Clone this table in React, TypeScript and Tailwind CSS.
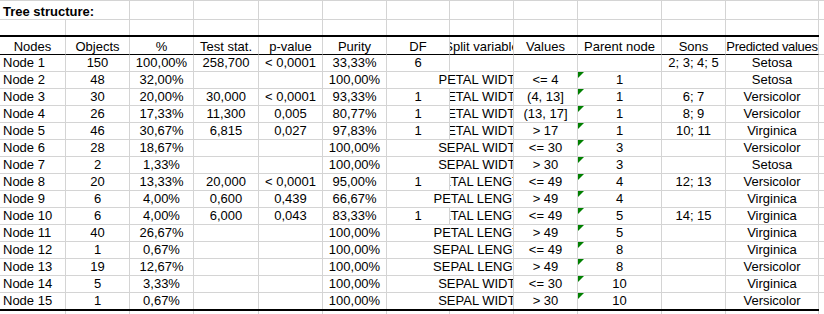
import React from 'react'

// column widths include the 1px grid line on the right
const W = [
  'w-[66px]', 'w-[64px]', 'w-[64px]', 'w-[65px]', 'w-[64px]', 'w-[64px]',
  'w-[63px]', 'w-[64px]', 'w-[64px]', 'w-[84px]', 'w-[64px]', 'w-[93px]',
]

const headers = [
  'Nodes', 'Objects', '%', 'Test stat.', 'p-value', 'Purity', 'DF',
  'Split variable', 'Values', 'Parent node', 'Sons', 'Predicted values',
]

const rows: string[][] = [
  ['Node 1', '150', '100,00%', '258,700', '< 0,0001', '33,33%', '6', '', '', '', '2; 3; 4; 5', 'Setosa'],
  ['Node 2', '48', '32,00%', '', '', '100,00%', '', 'PETAL WIDTH', '<= 4', '1', '', 'Setosa'],
  ['Node 3', '30', '20,00%', '30,000', '< 0,0001', '93,33%', '1', 'PETAL WIDTH', '(4, 13]', '1', '6; 7', 'Versicolor'],
  ['Node 4', '26', '17,33%', '11,300', '0,005', '80,77%', '1', 'PETAL WIDTH', '(13, 17]', '1', '8; 9', 'Versicolor'],
  ['Node 5', '46', '30,67%', '6,815', '0,027', '97,83%', '1', 'PETAL WIDTH', '> 17', '1', '10; 11', 'Virginica'],
  ['Node 6', '28', '18,67%', '', '', '100,00%', '', 'SEPAL WIDTH', '<= 30', '3', '', 'Versicolor'],
  ['Node 7', '2', '1,33%', '', '', '100,00%', '', 'SEPAL WIDTH', '> 30', '3', '', 'Setosa'],
  ['Node 8', '20', '13,33%', '20,000', '< 0,0001', '95,00%', '1', 'PETAL LENGTH', '<= 49', '4', '12; 13', 'Versicolor'],
  ['Node 9', '6', '4,00%', '0,600', '0,439', '66,67%', '', 'PETAL LENGTH', '> 49', '4', '', 'Virginica'],
  ['Node 10', '6', '4,00%', '6,000', '0,043', '83,33%', '1', 'PETAL LENGTH', '<= 49', '5', '14; 15', 'Virginica'],
  ['Node 11', '40', '26,67%', '', '', '100,00%', '', 'PETAL LENGTH', '> 49', '5', '', 'Virginica'],
  ['Node 12', '1', '0,67%', '', '', '100,00%', '', 'SEPAL LENGTH', '<= 49', '8', '', 'Virginica'],
  ['Node 13', '19', '12,67%', '', '', '100,00%', '', 'SEPAL LENGTH', '> 49', '8', '', 'Versicolor'],
  ['Node 14', '5', '3,33%', '', '', '100,00%', '', 'SEPAL WIDTH', '<= 30', '10', '', 'Virginica'],
  ['Node 15', '1', '0,67%', '', '', '100,00%', '', 'SEPAL WIDTH', '> 30', '10', '', 'Versicolor'],
]

function DataRow({ r, last }: { r: string[]; last: boolean }) {
  const h = last ? 'h-[16px]' : 'h-[17px] border-b'
  const base = `${h} box-border border-r border-[#d4d4d4] overflow-hidden flex items-center whitespace-nowrap leading-[16px] shrink-0`
  const dfEmpty = r[6] === '' && r[7] !== ''
  const cells: React.ReactNode[] = []

  for (let i = 0; i < 12; i++) {
    if (i === 6 && dfEmpty) {
      // split variable text spills left over the empty DF cell
      cells.push(
        <div key="merged" className={`${base} w-[127px]`}>
          <div className="ml-[63px] w-[63px] shrink-0 flex justify-center">
            <span>{r[7]}</span>
          </div>
        </div>
      )
      i++
      continue
    }
    if (i === 0) {
      cells.push(<div key={i} className={`${base} ${W[i]} pl-[3px]`}>{r[i]}</div>)
    } else if (i === 9) {
      cells.push(
        <div key={i} className={`${base} ${W[i]} justify-center relative`}>
          {r[i] !== '' && (
            <span className="absolute top-0 left-0 w-0 h-0 border-t-[6px] border-t-[#008000] border-r-[6px] border-r-transparent" />
          )}
          {r[i]}
        </div>
      )
    } else {
      cells.push(
        <div key={i} className={`${base} ${W[i]} justify-center`}>
          <span>{r[i]}</span>
        </div>
      )
    }
  }

  return (
    <div className="flex">
      {cells}
      <div className={`${h} flex-1 box-border border-[#d4d4d4]`} />
    </div>
  )
}

export default function App() {
  return (
    <div className="w-[824px] h-[314px] overflow-hidden bg-white text-black text-[13px] font-['Liberation_Sans',Arial,sans-serif]">
      {/* title row */}
      <div className="flex">
        <div className="h-[20px] w-[130px] box-border border-t border-b border-r border-[#d4d4d4] flex items-end pl-[3px] leading-[14px] font-bold whitespace-nowrap shrink-0">
          Tree structure:
        </div>
        {W.slice(2).map((w, i) => (
          <div key={i} className={`h-[20px] ${w} box-border border-t border-b border-r border-[#d4d4d4] shrink-0`} />
        ))}
        <div className="h-[20px] flex-1 box-border border-t border-b border-[#d4d4d4]" />
      </div>

      {/* empty row */}
      <div className="flex">
        {W.map((w, i) => (
          <div key={i} className={`h-[15px] ${w} box-border border-r border-[#d4d4d4] shrink-0`} />
        ))}
      </div>

      <div className="h-[2px] w-[819px] bg-black" />

      {/* header */}
      <div className="flex">
        {headers.map((t, i) => (
          <div
            key={i}
            className={`h-[18px] ${W[i]} box-border border-b border-b-black border-r border-r-[#d4d4d4] flex items-end justify-center overflow-hidden whitespace-nowrap leading-[14px] shrink-0`}
          >
            <span className={i === 11 ? 'tracking-[-0.3px]' : ''}>{t}</span>
          </div>
        ))}
        <div className="h-[18px] flex-1 box-border border-b border-[#d4d4d4]" />
      </div>

      {rows.map((r, i) => (
        <DataRow key={i} r={r} last={i === rows.length - 1} />
      ))}

      <div className="h-[2px] w-[819px] bg-black" />

      <div className="flex">
        {W.map((w, i) => (
          <div key={i} className={`h-[10px] ${w} box-border border-r border-[#d4d4d4] shrink-0`} />
        ))}
      </div>
    </div>
  )
}
